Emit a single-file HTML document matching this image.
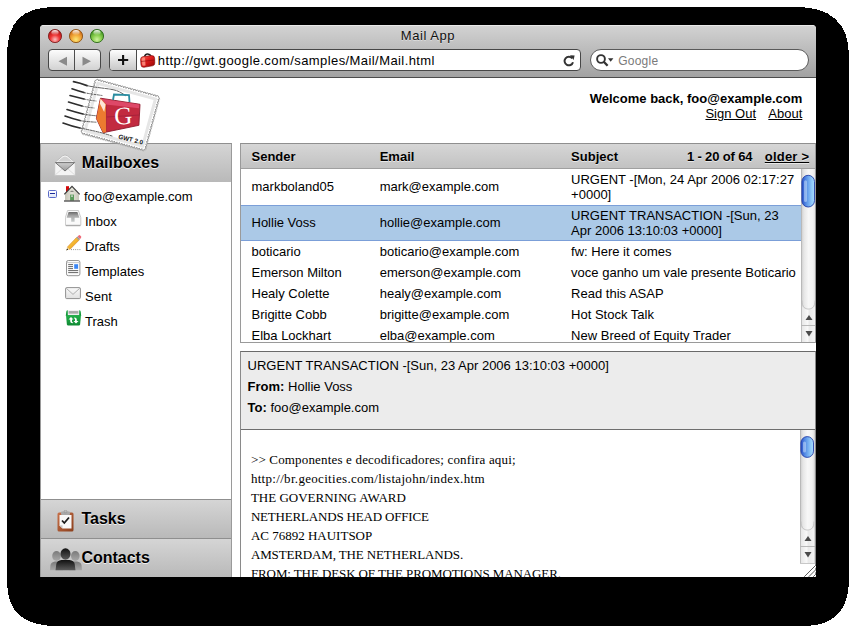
<!DOCTYPE html>
<html><head><meta charset="utf-8">
<style>
html,body{margin:0;padding:0;background:#fff;width:856px;height:633px;overflow:hidden;}
body{font-family:"Liberation Sans",sans-serif;position:relative;color:#000;}
.a{position:absolute;}
.nw{white-space:nowrap;}
#win{position:absolute;left:40px;top:25px;width:776px;height:552px;background:#fff;overflow:hidden;border-radius:4px 4px 0 0;}
#chrome{position:absolute;left:0;top:0;width:776px;height:51px;background:linear-gradient(#d2d2d2,#a2a2a2);border-top:1px solid #e9e9e9;border-bottom:1px solid #4c4c4c;}
.light{position:absolute;top:3px;width:14px;height:14px;border-radius:50%;}
#title{position:absolute;left:0;top:2.2px;width:776px;text-align:center;font-size:13px;line-height:15px;letter-spacing:.55px;color:#111;text-shadow:0 1px 0 rgba(255,255,255,.45);}
.btn{position:absolute;top:23px;height:20px;border:1px solid #474747;background:linear-gradient(#fcfcfc,#d2d2d2);box-sizing:content-box;}
#content{position:absolute;left:0;top:53px;width:776px;height:499px;background:#fff;overflow:hidden;}
.hdr{background:linear-gradient(#d5d5d5,#b9b9b9);}
.htxt{font-size:16px;line-height:18px;font-weight:bold;text-shadow:0 1px 0 rgba(255,255,255,.8);}
.t13{font-size:13px;line-height:15px;}
.b13{font-size:13px;line-height:15px;font-weight:bold;text-shadow:0 1px 0 rgba(255,255,255,.6);}
.thdr{background:linear-gradient(#d6d6d6,#c2c2c2);}
.sb{background:linear-gradient(90deg,#d8d8d8,#f4f4f4 30%,#fff 55%,#e6e6e6);}
.body{font-family:"Liberation Serif",serif;font-size:13px;line-height:19px;white-space:nowrap;}
</style></head>
<body>
<svg class="a" style="left:0;top:0" width="856" height="633" shape-rendering="crispEdges"><path d="M55 7 L796 7 C830 7 849 22 849 57 L849 580 C849 610 834 626 804 626 L57 626 C26 626 7 614 7 582 L7 55 C7 22 22 7 55 7 Z" fill="#000"/></svg>
<div id="win">
  <div id="chrome">
    <svg class="a" style="left:7px;top:2px" width="16" height="16" viewBox="-1 -1 16 16">
      <defs><radialGradient id="gr" cx="7" cy="10.5" r="8.5" gradientUnits="userSpaceOnUse"><stop offset="0" stop-color="#fcc0c0"/><stop offset=".55" stop-color="#ee3535"/><stop offset="1" stop-color="#b81818"/></radialGradient>
      <linearGradient id="hr" x1="0" x2="0" y1="0" y2="1"><stop offset="0" stop-color="#fff" stop-opacity=".95"/><stop offset="1" stop-color="#fff" stop-opacity="0"/></linearGradient></defs>
      <circle cx="7" cy="7" r="6.6" fill="url(#gr)" stroke="#7e2222" stroke-width=".9"/>
      <ellipse cx="7" cy="3.6" rx="3.6" ry="2.6" fill="url(#hr)"/>
    </svg>
    <svg class="a" style="left:28px;top:2px" width="16" height="16" viewBox="-1 -1 16 16">
      <defs><radialGradient id="go" cx="7" cy="10.5" r="8.5" gradientUnits="userSpaceOnUse"><stop offset="0" stop-color="#fbe878"/><stop offset=".55" stop-color="#f2a838"/><stop offset="1" stop-color="#d0701a"/></radialGradient>
      <linearGradient id="ho" x1="0" x2="0" y1="0" y2="1"><stop offset="0" stop-color="#fff" stop-opacity=".95"/><stop offset="1" stop-color="#fff" stop-opacity="0"/></linearGradient></defs>
      <circle cx="7" cy="7" r="6.6" fill="url(#go)" stroke="#8a5216" stroke-width=".9"/>
      <ellipse cx="7" cy="3.6" rx="3.6" ry="2.6" fill="url(#ho)"/>
    </svg>
    <svg class="a" style="left:49px;top:2px" width="16" height="16" viewBox="-1 -1 16 16">
      <defs><radialGradient id="gg" cx="7" cy="10.5" r="8.5" gradientUnits="userSpaceOnUse"><stop offset="0" stop-color="#cff4a0"/><stop offset=".55" stop-color="#86cc4c"/><stop offset="1" stop-color="#4a9a26"/></radialGradient>
      <linearGradient id="hg" x1="0" x2="0" y1="0" y2="1"><stop offset="0" stop-color="#fff" stop-opacity=".95"/><stop offset="1" stop-color="#fff" stop-opacity="0"/></linearGradient></defs>
      <circle cx="7" cy="7" r="6.6" fill="url(#gg)" stroke="#2e6a1e" stroke-width=".9"/>
      <ellipse cx="7" cy="3.6" rx="3.6" ry="2.6" fill="url(#hg)"/>
    </svg>
    <div id="title">Mail App</div>
    <!-- back/forward -->
    <div class="btn" style="left:8px;width:51px;border-radius:4px;">
      <div class="a" style="left:25px;top:0;width:1px;height:20px;background:#4e4e4e"></div>
      <svg class="a" style="left:0;top:0" width="51" height="20"><path d="M9.5 11.3 L18 6.8 L18 15.7 Z" fill="#8a8a8a"/><path d="M42 11.3 L33.5 6.8 L33.5 15.7 Z" fill="#8a8a8a"/></svg>
    </div>
    <!-- plus + url -->
    <div class="btn" style="left:69px;width:470px;border-radius:4px;background:#fff;overflow:hidden">
      <div class="a" style="left:0;top:0;width:26px;height:20px;background:linear-gradient(#fdfdfd,#c8c8c8);border-right:1px solid #4a4a4a"></div>
      <svg class="a" style="left:0;top:0" width="27" height="20"><path d="M8 10 H18.2 M13.1 4.9 V15.1" stroke="#111" stroke-width="2.1" fill="none"/></svg>
      <svg class="a" style="left:29px;top:2px" width="17" height="17" viewBox="0 0 17 17">
        <defs><linearGradient id="fv" x1="0" y1="0" x2="1" y2="1"><stop offset="0" stop-color="#ff6a5a"/><stop offset=".45" stop-color="#e01c1c"/><stop offset="1" stop-color="#8a0606"/></linearGradient></defs>
        <path d="M5.5 4.5 Q6.5 1.6 9.5 2.2 Q12 2.8 12 5" stroke="#222" stroke-width="1.5" fill="none"/>
        <path d="M1.5 7.5 Q1.5 5 4 4.6 L12.5 3.6 Q15.5 3.4 15.6 6 L15.8 11 Q15.8 13.4 13.5 13.8 L5 15.3 Q2.2 15.6 2 13 Z" fill="url(#fv)" stroke="#7a0a0a" stroke-width=".6"/>
        <path d="M3 7 Q3 5.8 4.5 5.6 L6 5.4 L6.5 13.5 L4.5 13.8 Q3.3 13.8 3.2 12.5 Z" fill="#ff9a8a" opacity=".8"/>
        <path d="M2 9.5 L15.7 8" stroke="#8a0a0a" stroke-width=".6"/>
      </svg>
      <div class="a nw" style="left:47.8px;top:2.8px;font-size:13px;line-height:15px;color:#000;letter-spacing:.42px">http://gwt.google.com/samples/Mail/Mail.html</div>
      <svg class="a" style="left:452px;top:4px" width="14" height="13" viewBox="0 0 14 13"><path d="M10.2 4.3 A4.3 4.3 0 1 0 11 8.2" stroke="#333" stroke-width="2" fill="none"/><path d="M8 1.2 L12.6 1.6 L11.6 6 Z" fill="#333"/></svg>
    </div>
    <!-- search -->
    <div class="btn" style="left:550px;width:217px;border-radius:11px;background:#fff;border-color:#5a5a5a">
      <svg class="a" style="left:3.5px;top:3px" width="22" height="14" viewBox="0 0 22 14"><circle cx="6" cy="6" r="3.9" stroke="#333" stroke-width="1.9" fill="none"/><path d="M8.8 8.8 L12.6 12.8" stroke="#333" stroke-width="2.3"/><path d="M13 5.2 L18.4 5.2 L15.7 8.8 Z" fill="#333"/></svg>
      <div class="a nw" style="left:27.2px;top:4.3px;font-size:12px;line-height:15px;letter-spacing:.25px;color:#7a7a7a">Google</div>
    </div>
  </div>
  <div id="content">
    <!-- welcome -->
    <div class="a nw" style="right:13.7px;top:13.4px;font-size:13px;line-height:15px;font-weight:bold;text-align:right">Welcome back, foo@example.com</div>
    <div class="a nw" style="right:13.7px;top:28.2px;font-size:13px;line-height:15px;text-align:right"><span style="text-decoration:underline">Sign Out</span><span style="display:inline-block;width:12.3px"></span><span style="text-decoration:underline">About</span></div>

    <!-- sidebar -->
    <div class="a" style="left:0;top:65px;width:190px;height:434px;border-left:1px solid #9a9a9a;border-right:1px solid #9a9a9a;border-top:1px solid #8f8f8f;background:#fff"></div>
    <div class="a hdr" style="left:1px;top:66px;width:190px;height:38px;"></div>
    <div class="a hdr" style="left:1px;top:421px;width:190px;height:38px;border-top:1px solid #8f8f8f"></div>
    <div class="a hdr" style="left:1px;top:460px;width:190px;height:38px;border-top:1px solid #8f8f8f"></div>
    <div class="a nw htxt" style="left:41.8px;top:75.5px">Mailboxes</div>
    <div class="a nw htxt" style="left:41.4px;top:431.5px">Tasks</div>
    <div class="a nw htxt" style="left:41.4px;top:471px">Contacts</div>
    <!-- header icons -->
    <svg class="a" style="left:14px;top:76px" width="22" height="22" viewBox="0 0 22 22">
      <defs><linearGradient id="envv" x1="0" x2="0" y1="0" y2="1"><stop offset="0" stop-color="#cfcfcf"/><stop offset="1" stop-color="#9a9a9a"/></linearGradient></defs>
      <path d="M0.8 8.6 L8.6 1.8 Q11 0.2 13.4 1.8 L21.2 8.6 Z" fill="#f6f6f6" stroke="#b4b4b4" stroke-width=".8"/>
      <path d="M3.3 7.6 L9.2 3.1 Q11 2.1 12.8 3.1 L18.7 7.6 Z" fill="#d2d2d2"/>
      <rect x="0.8" y="8.4" width="20.4" height="13" fill="#f4f4f4" stroke="#c2c2c2" stroke-width=".8"/>
      <path d="M1.2 21 L8.5 14.5 M20.8 21 L13.5 14.5" stroke="#d4d4d4" stroke-width=".8"/>
      <path d="M1.4 8.6 L11 17 L20.6 8.6 Z" fill="url(#envv)" stroke="#6a6a6a" stroke-width=".9" stroke-linejoin="round"/>
    </svg>
    <svg class="a" style="left:17px;top:432px" width="17" height="22" viewBox="0 0 17 22">
      <defs><linearGradient id="cbg" x1="0" x2="1" y1="0" y2="1"><stop offset="0" stop-color="#c8714a"/><stop offset="1" stop-color="#8a3f1c"/></linearGradient></defs>
      <rect x="0.5" y="2.5" width="16" height="19" rx="1.5" fill="url(#cbg)"/>
      <path d="M2.5 5 H14.5 V18.5 H5.5 L2.5 15.5 Z" fill="#f8f8f8"/>
      <path d="M2.5 15.5 L5.5 15.3 L5.5 18.5 Z" fill="#c8c8c8"/>
      <rect x="4" y="1.5" width="9" height="3.5" rx="1" fill="#a8a8a8"/>
      <circle cx="8.5" cy="1.6" r="1.4" fill="none" stroke="#999" stroke-width=".8"/>
      <path d="M5 10.5 L7.3 13 L12 7.5" stroke="#1a1a1a" stroke-width="1.8" fill="none"/>
    </svg>
    <svg class="a" style="left:10px;top:470px" width="32" height="23" viewBox="0 0 32 23">
      <defs><linearGradient id="pf" x1="0" x2="0" y1="0" y2="1"><stop offset="0" stop-color="#111"/><stop offset="1" stop-color="#5a5a5a"/></linearGradient>
      <linearGradient id="pb" x1="0" x2="0" y1="0" y2="1"><stop offset="0" stop-color="#7a7a7a"/><stop offset="1" stop-color="#a8a8a8"/></linearGradient></defs>
      <ellipse cx="6.5" cy="8" rx="4.3" ry="5" fill="url(#pb)"/><path d="M0 22.2 L0.5 17 Q1 14 5 13.5 L8 13.5 Q12 14 12.5 17 L13 22.2 Z" fill="url(#pb)"/>
      <ellipse cx="25.3" cy="8" rx="4.3" ry="5" fill="url(#pb)"/><path d="M19 22.2 L19.5 17 Q20 14 24 13.5 L27 13.5 Q31 14 31.5 17 L32 22.2 Z" fill="url(#pb)"/>
      <ellipse cx="15.5" cy="6" rx="5" ry="5.8" fill="url(#pf)"/><path d="M5.5 22.2 L6.3 16 Q7 12.5 11.5 12 L19.5 12 Q24 12.5 24.7 16 L25.5 22.2 Z" fill="url(#pf)"/>
    </svg>
    <!-- logo -->
    <svg class="a" style="left:0;top:0;overflow:visible" width="140" height="80">
      <g transform="translate(80.25 36.8) rotate(15.2)">
        <path d="M-32.25 -27.00 a1.29 1.30 0 0 1 2.58 0 a1.29 1.30 0 0 1 2.58 0 a1.29 1.30 0 0 1 2.58 0 a1.29 1.30 0 0 1 2.58 0 a1.29 1.30 0 0 1 2.58 0 a1.29 1.30 0 0 1 2.58 0 a1.29 1.30 0 0 1 2.58 0 a1.29 1.30 0 0 1 2.58 0 a1.29 1.30 0 0 1 2.58 0 a1.29 1.30 0 0 1 2.58 0 a1.29 1.30 0 0 1 2.58 0 a1.29 1.30 0 0 1 2.58 0 a1.29 1.30 0 0 1 2.58 0 a1.29 1.30 0 0 1 2.58 0 a1.29 1.30 0 0 1 2.58 0 a1.29 1.30 0 0 1 2.58 0 a1.29 1.30 0 0 1 2.58 0 a1.29 1.30 0 0 1 2.58 0 a1.29 1.30 0 0 1 2.58 0 a1.29 1.30 0 0 1 2.58 0 a1.29 1.30 0 0 1 2.58 0 a1.29 1.30 0 0 1 2.58 0 a1.29 1.30 0 0 1 2.58 0 a1.29 1.30 0 0 1 2.58 0 a1.29 1.30 0 0 1 2.58 0 a1.30 1.29 0 0 1 0 2.57 a1.30 1.29 0 0 1 0 2.57 a1.30 1.29 0 0 1 0 2.57 a1.30 1.29 0 0 1 0 2.57 a1.30 1.29 0 0 1 0 2.57 a1.30 1.29 0 0 1 0 2.57 a1.30 1.29 0 0 1 0 2.57 a1.30 1.29 0 0 1 0 2.57 a1.30 1.29 0 0 1 0 2.57 a1.30 1.29 0 0 1 0 2.57 a1.30 1.29 0 0 1 0 2.57 a1.30 1.29 0 0 1 0 2.57 a1.30 1.29 0 0 1 0 2.57 a1.30 1.29 0 0 1 0 2.57 a1.30 1.29 0 0 1 0 2.57 a1.30 1.29 0 0 1 0 2.57 a1.30 1.29 0 0 1 0 2.57 a1.30 1.29 0 0 1 0 2.57 a1.30 1.29 0 0 1 0 2.57 a1.30 1.29 0 0 1 0 2.57 a1.30 1.29 0 0 1 0 2.57 a1.29 1.30 0 0 1 -2.58 0 a1.29 1.30 0 0 1 -2.58 0 a1.29 1.30 0 0 1 -2.58 0 a1.29 1.30 0 0 1 -2.58 0 a1.29 1.30 0 0 1 -2.58 0 a1.29 1.30 0 0 1 -2.58 0 a1.29 1.30 0 0 1 -2.58 0 a1.29 1.30 0 0 1 -2.58 0 a1.29 1.30 0 0 1 -2.58 0 a1.29 1.30 0 0 1 -2.58 0 a1.29 1.30 0 0 1 -2.58 0 a1.29 1.30 0 0 1 -2.58 0 a1.29 1.30 0 0 1 -2.58 0 a1.29 1.30 0 0 1 -2.58 0 a1.29 1.30 0 0 1 -2.58 0 a1.29 1.30 0 0 1 -2.58 0 a1.29 1.30 0 0 1 -2.58 0 a1.29 1.30 0 0 1 -2.58 0 a1.29 1.30 0 0 1 -2.58 0 a1.29 1.30 0 0 1 -2.58 0 a1.29 1.30 0 0 1 -2.58 0 a1.29 1.30 0 0 1 -2.58 0 a1.29 1.30 0 0 1 -2.58 0 a1.29 1.30 0 0 1 -2.58 0 a1.29 1.30 0 0 1 -2.58 0 a1.30 1.29 0 0 1 0 -2.57 a1.30 1.29 0 0 1 0 -2.57 a1.30 1.29 0 0 1 0 -2.57 a1.30 1.29 0 0 1 0 -2.57 a1.30 1.29 0 0 1 0 -2.57 a1.30 1.29 0 0 1 0 -2.57 a1.30 1.29 0 0 1 0 -2.57 a1.30 1.29 0 0 1 0 -2.57 a1.30 1.29 0 0 1 0 -2.57 a1.30 1.29 0 0 1 0 -2.57 a1.30 1.29 0 0 1 0 -2.57 a1.30 1.29 0 0 1 0 -2.57 a1.30 1.29 0 0 1 0 -2.57 a1.30 1.29 0 0 1 0 -2.57 a1.30 1.29 0 0 1 0 -2.57 a1.30 1.29 0 0 1 0 -2.57 a1.30 1.29 0 0 1 0 -2.57 a1.30 1.29 0 0 1 0 -2.57 a1.30 1.29 0 0 1 0 -2.57 a1.30 1.29 0 0 1 0 -2.57 a1.30 1.29 0 0 1 0 -2.57 Z" fill="#fff" stroke="#8c8c8c" stroke-width=".8" transform="translate(.6 .8)" opacity=".35"/>
        <path d="M-32.25 -27.00 a1.29 1.30 0 0 1 2.58 0 a1.29 1.30 0 0 1 2.58 0 a1.29 1.30 0 0 1 2.58 0 a1.29 1.30 0 0 1 2.58 0 a1.29 1.30 0 0 1 2.58 0 a1.29 1.30 0 0 1 2.58 0 a1.29 1.30 0 0 1 2.58 0 a1.29 1.30 0 0 1 2.58 0 a1.29 1.30 0 0 1 2.58 0 a1.29 1.30 0 0 1 2.58 0 a1.29 1.30 0 0 1 2.58 0 a1.29 1.30 0 0 1 2.58 0 a1.29 1.30 0 0 1 2.58 0 a1.29 1.30 0 0 1 2.58 0 a1.29 1.30 0 0 1 2.58 0 a1.29 1.30 0 0 1 2.58 0 a1.29 1.30 0 0 1 2.58 0 a1.29 1.30 0 0 1 2.58 0 a1.29 1.30 0 0 1 2.58 0 a1.29 1.30 0 0 1 2.58 0 a1.29 1.30 0 0 1 2.58 0 a1.29 1.30 0 0 1 2.58 0 a1.29 1.30 0 0 1 2.58 0 a1.29 1.30 0 0 1 2.58 0 a1.29 1.30 0 0 1 2.58 0 a1.30 1.29 0 0 1 0 2.57 a1.30 1.29 0 0 1 0 2.57 a1.30 1.29 0 0 1 0 2.57 a1.30 1.29 0 0 1 0 2.57 a1.30 1.29 0 0 1 0 2.57 a1.30 1.29 0 0 1 0 2.57 a1.30 1.29 0 0 1 0 2.57 a1.30 1.29 0 0 1 0 2.57 a1.30 1.29 0 0 1 0 2.57 a1.30 1.29 0 0 1 0 2.57 a1.30 1.29 0 0 1 0 2.57 a1.30 1.29 0 0 1 0 2.57 a1.30 1.29 0 0 1 0 2.57 a1.30 1.29 0 0 1 0 2.57 a1.30 1.29 0 0 1 0 2.57 a1.30 1.29 0 0 1 0 2.57 a1.30 1.29 0 0 1 0 2.57 a1.30 1.29 0 0 1 0 2.57 a1.30 1.29 0 0 1 0 2.57 a1.30 1.29 0 0 1 0 2.57 a1.30 1.29 0 0 1 0 2.57 a1.29 1.30 0 0 1 -2.58 0 a1.29 1.30 0 0 1 -2.58 0 a1.29 1.30 0 0 1 -2.58 0 a1.29 1.30 0 0 1 -2.58 0 a1.29 1.30 0 0 1 -2.58 0 a1.29 1.30 0 0 1 -2.58 0 a1.29 1.30 0 0 1 -2.58 0 a1.29 1.30 0 0 1 -2.58 0 a1.29 1.30 0 0 1 -2.58 0 a1.29 1.30 0 0 1 -2.58 0 a1.29 1.30 0 0 1 -2.58 0 a1.29 1.30 0 0 1 -2.58 0 a1.29 1.30 0 0 1 -2.58 0 a1.29 1.30 0 0 1 -2.58 0 a1.29 1.30 0 0 1 -2.58 0 a1.29 1.30 0 0 1 -2.58 0 a1.29 1.30 0 0 1 -2.58 0 a1.29 1.30 0 0 1 -2.58 0 a1.29 1.30 0 0 1 -2.58 0 a1.29 1.30 0 0 1 -2.58 0 a1.29 1.30 0 0 1 -2.58 0 a1.29 1.30 0 0 1 -2.58 0 a1.29 1.30 0 0 1 -2.58 0 a1.29 1.30 0 0 1 -2.58 0 a1.29 1.30 0 0 1 -2.58 0 a1.30 1.29 0 0 1 0 -2.57 a1.30 1.29 0 0 1 0 -2.57 a1.30 1.29 0 0 1 0 -2.57 a1.30 1.29 0 0 1 0 -2.57 a1.30 1.29 0 0 1 0 -2.57 a1.30 1.29 0 0 1 0 -2.57 a1.30 1.29 0 0 1 0 -2.57 a1.30 1.29 0 0 1 0 -2.57 a1.30 1.29 0 0 1 0 -2.57 a1.30 1.29 0 0 1 0 -2.57 a1.30 1.29 0 0 1 0 -2.57 a1.30 1.29 0 0 1 0 -2.57 a1.30 1.29 0 0 1 0 -2.57 a1.30 1.29 0 0 1 0 -2.57 a1.30 1.29 0 0 1 0 -2.57 a1.30 1.29 0 0 1 0 -2.57 a1.30 1.29 0 0 1 0 -2.57 a1.30 1.29 0 0 1 0 -2.57 a1.30 1.29 0 0 1 0 -2.57 a1.30 1.29 0 0 1 0 -2.57 a1.30 1.29 0 0 1 0 -2.57 Z" fill="#fff" stroke="#8c8c8c" stroke-width=".9"/>
        <rect x="-29.8" y="-24.5" width="59.6" height="49" fill="none" stroke="#e6e6e6" stroke-width="3"/>
      </g>
      <g fill="none" stroke="#2e2e2e" stroke-linecap="round">
        <path d="M33.5 3.7 Q40 5 47 7.6" stroke-width="1.7"/>
        <path d="M32 10.7 Q38 12.6 44 14.6" stroke-width="1.6"/>
        <path d="M30 17.5 Q37 19.3 44 21" stroke-width="1.6"/>
        <path d="M28.5 24 Q35 26 42 28" stroke-width="1.6"/>
        <path d="M27 31.5 Q35 34 43 36" stroke-width="1.6"/>
        <path d="M25 38 Q32 40.5 40 42.6" stroke-width="1.6"/>
        <path d="M23 45 Q31 48 40 50" stroke-width="1.6"/>
      </g>
      <g fill="none" stroke="#444" stroke-width="1" stroke-linecap="round" opacity=".85">
        <path d="M47 7.6 C55 9.6 64 10 72 11.5 C78 12.5 82 15 86 18" stroke-dasharray="6 1.2 3 1.2"/>
        <path d="M44 14.6 C50 16 56 16.5 62 17.5" stroke-dasharray="2 1.4"/>
        <path d="M44 21 C48 22 52 22.5 56 23" stroke-dasharray="1.5 1.5"/>
        <path d="M42 28 C46 29 50 29.5 54 30" stroke-dasharray="1.5 1.5"/>
        <path d="M43 36 C48 37 53 37.5 58 38" stroke-dasharray="2 1.2"/>
        <path d="M40 42.6 C45 43.5 50 43.8 56 44.2" stroke-dasharray="2.5 1.2"/>
        <path d="M40 50 C50 52 60 54 72 58" stroke-dasharray="5 1.2 3 1.2"/>
      </g>
      <path d="M60.5 20.2 L100 26.3 L98.9 47.3 L63.1 54.7 L56.4 40.5 L59.4 25.1 Z" fill="#c22a40" stroke="#8e1a2c" stroke-width=".9" stroke-linejoin="round"/>
      <path d="M61 20.8 L99.3 26.6 L99 30.2 L66 26.4 Z" fill="#de4868"/>
      <path d="M60.5 20.2 L66 26.2 L66.5 54 L63.1 54.7 L56.4 40.5 L59.4 25.1 Z" fill="#ec7a30"/>
      <path d="M60.5 20.8 L65.6 26.4 L64.2 34 L59.8 25.4 Z" fill="#fde6d8"/>
      <path d="M66.4 26.4 L66.5 54" stroke="#a8203a" stroke-width=".7"/>
      <path d="M66.5 39 L99.3 37" stroke="#a02038" stroke-width=".8"/>
      <path d="M73 22 L74 16.5 L89 17 L89.5 24" fill="none" stroke="#2a8ca0" stroke-width="1.8"/>
      <text x="0" y="0" transform="translate(83.5 46.3) rotate(-2)" font-family="Liberation Serif" font-size="25" fill="#fff" text-anchor="middle">G</text>
      <text x="0" y="0" transform="translate(78 60.5) rotate(14)" font-family="Liberation Sans" font-weight="bold" font-size="6.3" fill="#111">GWT 2.0</text>
    </svg>
    <!-- tree -->
    <div class="a" style="left:8px;top:111.6px;width:6.6px;height:6.6px;border:1px solid #5a6ac8;border-radius:1.5px;background:linear-gradient(#fff,#dfe6f6)"></div>
    <div class="a" style="left:10px;top:114.6px;width:4.6px;height:1.4px;background:#1a2a9a"></div>
    <svg class="a" style="left:24px;top:107px" width="17" height="17" viewBox="0 0 17 17">
      <defs><linearGradient id="hw" x1="0" x2="1" y1="0" y2="0"><stop offset="0" stop-color="#c4c3b6"/><stop offset=".5" stop-color="#e4e3d8"/><stop offset="1" stop-color="#c8c7ba"/></linearGradient></defs>
      <rect x="2" y="1.2" width="3" height="6" fill="#d40808"/>
      <path d="M1 8.8 L8 1.6 L15 8.8 L15 15.6 L1 15.6 Z" fill="url(#hw)"/>
      <path d="M0.3 9.4 L8 1.3 L15.7 9.4" stroke="#3e3e3e" stroke-width="1.2" fill="none"/>
      <path d="M6 6.6 Q8 4.8 10 6.6 Z" fill="#333"/>
      <rect x="6.1" y="9.6" width="3.9" height="6" fill="#5c9c5c"/>
      <rect x="7" y="10.5" width="2" height="1.2" fill="#ddd"/>
      <rect x="0" y="15.4" width="16" height="1.2" fill="#3a3a3a"/>
    </svg>
    <div class="a nw t13" style="left:44px;top:111px">foo@example.com</div>
    <svg class="a" style="left:25px;top:132px" width="17" height="17" viewBox="0 0 17 17">
      <defs><linearGradient id="ib" x1="0" x2="0" y1="0" y2="1"><stop offset="0" stop-color="#6a6a6a"/><stop offset=".4" stop-color="#a8a8a8"/><stop offset="1" stop-color="#c8cccc"/></linearGradient></defs>
      <path d="M2.6 0.5 L13.4 0.5 L15.8 7.6 L15.8 15.2 L0.4 15.2 L0.4 7.6 Z" fill="#fafafa" stroke="#bdbdbd" stroke-width=".8"/>
      <path d="M3.6 2 L12.4 2 L14.4 7.8 L9.6 7.8 L9.6 11.8 L6.2 11.8 L6.2 7.8 L1.6 7.8 Z" fill="url(#ib)"/>
      <rect x="0.8" y="15.2" width="14.6" height="1" fill="#a0a0a0"/>
    </svg>
    <div class="a nw t13" style="left:45px;top:136px">Inbox</div>
    <svg class="a" style="left:25px;top:156px" width="17" height="17" viewBox="0 0 17 17">
      <defs><linearGradient id="pc" x1="0" y1="0" x2="1" y2="1"><stop offset="0" stop-color="#ffe060"/><stop offset="1" stop-color="#e88a00"/></linearGradient></defs>
      <path d="M2.2 13.2 L11.4 3.6 L14 6.2 L4.8 15.6 Z" fill="url(#pc)" stroke="#c86a10" stroke-width=".4"/>
      <path d="M11.4 3.6 L12.6 2.4 L15.2 5 L14 6.2 Z" fill="#9a9a9a"/>
      <path d="M12.6 2.4 L13.6 1.4 Q14.4 0.7 15.2 1.4 L16 2.2 Q16.7 3 16 3.8 L15.2 5 Z" fill="#f06a78"/>
      <path d="M2.2 13.2 L4.8 15.6 L1.2 16.4 Z" fill="#f0d8a0"/>
      <path d="M1.2 16.4 L2.2 14.4 L3.2 15.6 Z" fill="#111"/>
      <path d="M6 15.6 H16" stroke="#777" stroke-width=".8" stroke-dasharray="1 1.1"/>
    </svg>
    <div class="a nw t13" style="left:45px;top:161px">Drafts</div>
    <svg class="a" style="left:26px;top:182px" width="15" height="17" viewBox="0 0 15 17">
      <rect x="0.5" y="0.5" width="13.4" height="15.2" rx="1.8" fill="#fcfcfc" stroke="#8a8a8a" stroke-width=".9"/>
      <path d="M1 2.6 H13.4" stroke="#c8c8c8" stroke-width="1"/>
      <rect x="8.2" y="4.2" width="3.9" height="4.6" fill="#3a86f4"/>
      <path d="M2.2 4.6 H7 M2.2 6.6 H7 M2.2 8.6 H7 M2.2 10.6 H12.2 M2.2 12.6 H12.2" stroke="#555" stroke-width=".9"/>
    </svg>
    <div class="a nw t13" style="left:45px;top:186px">Templates</div>
    <svg class="a" style="left:25px;top:209px" width="17" height="13" viewBox="0 0 17 13">
      <defs><linearGradient id="se" x1="0" x2="0" y1="0" y2="1"><stop offset="0" stop-color="#fafafa"/><stop offset="1" stop-color="#e0e0e0"/></linearGradient></defs>
      <rect x="0.6" y="0.6" width="14.8" height="11" rx="1" fill="url(#se)" stroke="#858585" stroke-width=".9"/>
      <path d="M1.2 1.2 L8 7.4 L14.8 1.2" stroke="#a8a8a8" stroke-width=".9" fill="none"/>
    </svg>
    <div class="a nw t13" style="left:45px;top:210.5px">Sent</div>
    <svg class="a" style="left:25px;top:231px" width="17" height="17" viewBox="0 0 17 17">
      <defs><linearGradient id="tg" x1="0" x2="0" y1="0" y2="1"><stop offset="0" stop-color="#22b04a"/><stop offset="1" stop-color="#108a34"/></linearGradient>
      <linearGradient id="tl" x1="0" x2="0" y1="0" y2="1"><stop offset="0" stop-color="#8a8a8a"/><stop offset="1" stop-color="#d0d0d0"/></linearGradient></defs>
      <path d="M1.2 3 Q1.2 1.4 2.6 1.2 L14.4 1.2 Q15.8 1.4 15.8 3 L16.2 7 L0.8 7 Z" fill="url(#tg)"/>
      <rect x="2.8" y="1.0" width="11.4" height="5.2" fill="#f4f0f4"/>
      <rect x="3.6" y="2.3" width="9.8" height="2.8" fill="url(#tl)"/>
      <path d="M1 6.2 L16 6.2 L15.1 15.6 Q15 16.4 14.2 16.4 L2.8 16.4 Q2 16.4 1.9 15.6 Z" fill="url(#tg)"/>
      <path d="M3.5 10.6 L6 8 L8.5 10.6 L7 10.6 L7 12.2 Q7 13.4 8.4 13.4 L7.6 14.2 Q5.2 14 5.2 12.2 L5.2 10.6 Z" fill="#fff"/>
      <path d="M13.5 12 L11 14.6 L8.5 12 L10 12 L10 10.4 Q10 9.2 8.6 9.2 L9.4 8.4 Q11.8 8.6 11.8 10.4 L11.8 12 Z" fill="#fff"/>
    </svg>
    <div class="a nw t13" style="left:45px;top:236px">Trash</div>

    <!-- list -->
    <div class="a" style="left:200px;top:65px;width:574px;height:198px;border:1px solid #9a9a9a;border-top-color:#8f8f8f;background:#fff;overflow:hidden">
      <div class="a thdr" style="left:0;top:0;width:574px;height:24px;border-bottom:1px solid #a0a0a0"></div>
      <div class="a nw b13" style="left:10.5px;top:5px">Sender</div>
      <div class="a nw b13" style="left:138.7px;top:5px">Email</div>
      <div class="a nw b13" style="left:330.1px;top:5px">Subject</div>
      <div class="a nw b13" style="left:445.9px;top:5px;letter-spacing:-0.15px">1 - 20 of 64</div>
      <div class="a nw b13" style="left:523.8px;top:5px;text-decoration:underline;letter-spacing:.2px">older &gt;</div>
      <div class="a" style="left:0;top:61px;width:560px;height:34px;background:#abc9e7;border-top:1px solid #7b9fd8;border-bottom:1px solid #7b9fd8"></div>
      <div class="a nw t13" style="left:10.5px;top:35px">markboland05</div>
      <div class="a nw t13" style="left:138.7px;top:35px">mark@example.com</div>
      <div class="a nw t13" style="left:330.1px;top:28px">URGENT -[Mon, 24 Apr 2006 02:17:27<br>+0000]</div>
      <div class="a nw t13" style="left:10.5px;top:71.2px">Hollie Voss</div>
      <div class="a nw t13" style="left:138.7px;top:71.2px">hollie@example.com</div>
      <div class="a nw t13" style="left:330.1px;top:63.8px">URGENT TRANSACTION -[Sun, 23<br>Apr 2006 13:10:03 +0000]</div>
      <div class="a nw t13" style="left:10.5px;top:99.7px">boticario</div>
      <div class="a nw t13" style="left:138.7px;top:99.7px">boticario@example.com</div>
      <div class="a nw t13" style="left:330.1px;top:99.7px">fw: Here it comes</div>
      <div class="a nw t13" style="left:10.5px;top:120.7px">Emerson Milton</div>
      <div class="a nw t13" style="left:138.7px;top:120.7px">emerson@example.com</div>
      <div class="a nw t13" style="left:330.1px;top:120.7px">voce ganho um vale presente Boticario</div>
      <div class="a nw t13" style="left:10.5px;top:141.7px">Healy Colette</div>
      <div class="a nw t13" style="left:138.7px;top:141.7px">healy@example.com</div>
      <div class="a nw t13" style="left:330.1px;top:141.7px">Read this ASAP</div>
      <div class="a nw t13" style="left:10.5px;top:162.7px">Brigitte Cobb</div>
      <div class="a nw t13" style="left:138.7px;top:162.7px">brigitte@example.com</div>
      <div class="a nw t13" style="left:330.1px;top:162.7px">Hot Stock Talk</div>
      <div class="a nw t13" style="left:10.5px;top:183.7px">Elba Lockhart</div>
      <div class="a nw t13" style="left:138.7px;top:183.7px">elba@example.com</div>
      <div class="a nw t13" style="left:330.1px;top:183.7px">New Breed of Equity Trader</div>
      <!-- scrollbar -->
      <div class="a" style="left:560px;top:25px;width:15px;height:173px"><svg class="a" style="left:0;top:0" width="15" height="173" viewBox="0 0 15 173">
  <defs>
    <linearGradient id="trl" x1="0" x2="1" y1="0" y2="0"><stop offset="0" stop-color="#c9c9c9"/><stop offset=".2" stop-color="#e6e6e6"/><stop offset=".5" stop-color="#f7f7f7"/><stop offset=".8" stop-color="#f2f2f2"/><stop offset="1" stop-color="#dadada"/></linearGradient>
    <linearGradient id="abl" x1="0" x2="1" y1="0" y2="0"><stop offset="0" stop-color="#e4e4e4"/><stop offset=".45" stop-color="#f8f8f8"/><stop offset=".55" stop-color="#e9e9e9"/><stop offset="1" stop-color="#f4f4f4"/></linearGradient>
    <linearGradient id="thl" x1="0" x2="1" y1="0" y2="0"><stop offset="0" stop-color="#2a52c8"/><stop offset=".35" stop-color="#5890e6"/><stop offset=".75" stop-color="#8cc6f8"/><stop offset="1" stop-color="#a8dcff"/></linearGradient>
    <linearGradient id="capl" x1="0" x2="0" y1="0" y2="1"><stop offset="0" stop-color="#ffffff"/><stop offset="1" stop-color="#d4d4d4"/></linearGradient>
  </defs>
  <rect x="0" y="0" width="15" height="173" fill="url(#abl)"/>
  <rect x="0" y="0" width="15" height="140.5" fill="url(#trl)"/>
  <path d="M0 131.5 C0 139.5 4 140.5 7.5 140.5 C11 140.5 15 139.5 15 131.5 L15 141.5 L0 141.5 Z" fill="url(#abl)"/>
  <path d="M1 131.5 C1 138.5 4.5 140.0 7.5 140.0 C10.5 140.0 14 138.5 14 131.5" fill="none" stroke="#c4c4c4" stroke-width="1"/>
  <rect x="0" y="0" width="0.8" height="173" fill="#b5b5b5"/>
  <rect x="14.2" y="0" width="0.8" height="173" fill="#cfcfcf"/>
  <path d="M0 156.5 H15" stroke="#b8b8b8" stroke-width="1"/>
  <path d="M4.5 151.1 L11.5 151.1 L8 145.9 Z" fill="#4a4a4a"/>
  <path d="M4.5 161.89999999999998 L11.5 161.89999999999998 L8 167.5 Z" fill="#4a4a4a"/>
  <rect x="0.9" y="6.3" width="12.6" height="31.7" rx="6.3" fill="url(#thl)" stroke="#2440a8" stroke-width=".9"/>
  <rect x="3" y="11.3" width="3" height="21.7" rx="1.5" fill="#e0f0ff" opacity=".45"/>
</svg></div>
    </div>

    <!-- detail -->
    <div class="a" style="left:200px;top:273px;width:574px;height:230px;border:1px solid #8a8a8a;border-top-color:#6a6a6a;background:#fff;overflow:hidden">
      <div class="a" style="left:0;top:0;width:574px;height:77px;background:#ececec;border-bottom:1px solid #6e6e6e"></div>
      <div class="a nw t13" style="left:6.6px;top:5.8px">URGENT TRANSACTION -[Sun, 23 Apr 2006 13:10:03 +0000]</div>
      <div class="a nw t13" style="left:6.6px;top:26.7px"><b>From:</b> Hollie Voss</div>
      <div class="a nw t13" style="left:6.6px;top:47.7px"><b>To:</b> foo@example.com</div>
      <div class="a body" style="left:9.9px;top:97.9px"><div style="letter-spacing:.17px">&gt;&gt; Componentes e decodificadores; confira aqui;</div><div style="letter-spacing:.31px">http://br.geocities.com/listajohn/index.htm</div><div>THE GOVERNING AWARD</div><div style="letter-spacing:-.18px">NETHERLANDS HEAD OFFICE</div><div>AC 76892 HAUITSOP</div><div style="letter-spacing:-.13px">AMSTERDAM, THE NETHERLANDS.</div><div style="letter-spacing:-.1px">FROM: THE DESK OF THE PROMOTIONS MANAGER.</div></div>
      <div class="a" style="left:559px;top:78px;width:15px;height:133px;border-bottom:1px solid #c8c8c8"><svg class="a" style="left:0;top:0" width="15" height="133" viewBox="0 0 15 133">
  <defs>
    <linearGradient id="trb" x1="0" x2="1" y1="0" y2="0"><stop offset="0" stop-color="#c9c9c9"/><stop offset=".2" stop-color="#e6e6e6"/><stop offset=".5" stop-color="#f7f7f7"/><stop offset=".8" stop-color="#f2f2f2"/><stop offset="1" stop-color="#dadada"/></linearGradient>
    <linearGradient id="abb" x1="0" x2="1" y1="0" y2="0"><stop offset="0" stop-color="#e4e4e4"/><stop offset=".45" stop-color="#f8f8f8"/><stop offset=".55" stop-color="#e9e9e9"/><stop offset="1" stop-color="#f4f4f4"/></linearGradient>
    <linearGradient id="thb" x1="0" x2="1" y1="0" y2="0"><stop offset="0" stop-color="#2a52c8"/><stop offset=".35" stop-color="#5890e6"/><stop offset=".75" stop-color="#8cc6f8"/><stop offset="1" stop-color="#a8dcff"/></linearGradient>
    <linearGradient id="capb" x1="0" x2="0" y1="0" y2="1"><stop offset="0" stop-color="#ffffff"/><stop offset="1" stop-color="#d4d4d4"/></linearGradient>
  </defs>
  <rect x="0" y="0" width="15" height="133" fill="url(#abb)"/>
  <rect x="0" y="0" width="15" height="100.5" fill="url(#trb)"/>
  <path d="M0 91.5 C0 99.5 4 100.5 7.5 100.5 C11 100.5 15 99.5 15 91.5 L15 101.5 L0 101.5 Z" fill="url(#abb)"/>
  <path d="M1 91.5 C1 98.5 4.5 100.0 7.5 100.0 C10.5 100.0 14 98.5 14 91.5" fill="none" stroke="#c4c4c4" stroke-width="1"/>
  <rect x="0" y="0" width="0.8" height="133" fill="#b5b5b5"/>
  <rect x="14.2" y="0" width="0.8" height="133" fill="#cfcfcf"/>
  <path d="M0 116.5 H15" stroke="#b8b8b8" stroke-width="1"/>
  <path d="M4.5 111.1 L11.5 111.1 L8 105.9 Z" fill="#4a4a4a"/>
  <path d="M4.5 121.9 L11.5 121.9 L8 127.5 Z" fill="#4a4a4a"/>
  <rect x="0.9" y="6.6" width="12.6" height="20.799999999999997" rx="6.3" fill="url(#thb)" stroke="#2440a8" stroke-width=".9"/>
  <rect x="3" y="11.6" width="3" height="10.799999999999997" rx="1.5" fill="#e0f0ff" opacity=".45"/>
</svg></div>
    </div>
<svg class="a" style="left:762px;top:485px" width="14" height="14" viewBox="0 0 14 14"><path d="M3 14 L14 3 M7.5 14 L14 7.5 M12 14 L14 12" stroke="#fff" stroke-width="1.6"/><path d="M2.2 13.8 L13.8 2.2 M6.7 13.8 L13.8 6.7 M11.2 13.8 L13.8 11.2" stroke="#5a5a5a" stroke-width="1"/></svg>
  </div>
</div>
</body></html>
